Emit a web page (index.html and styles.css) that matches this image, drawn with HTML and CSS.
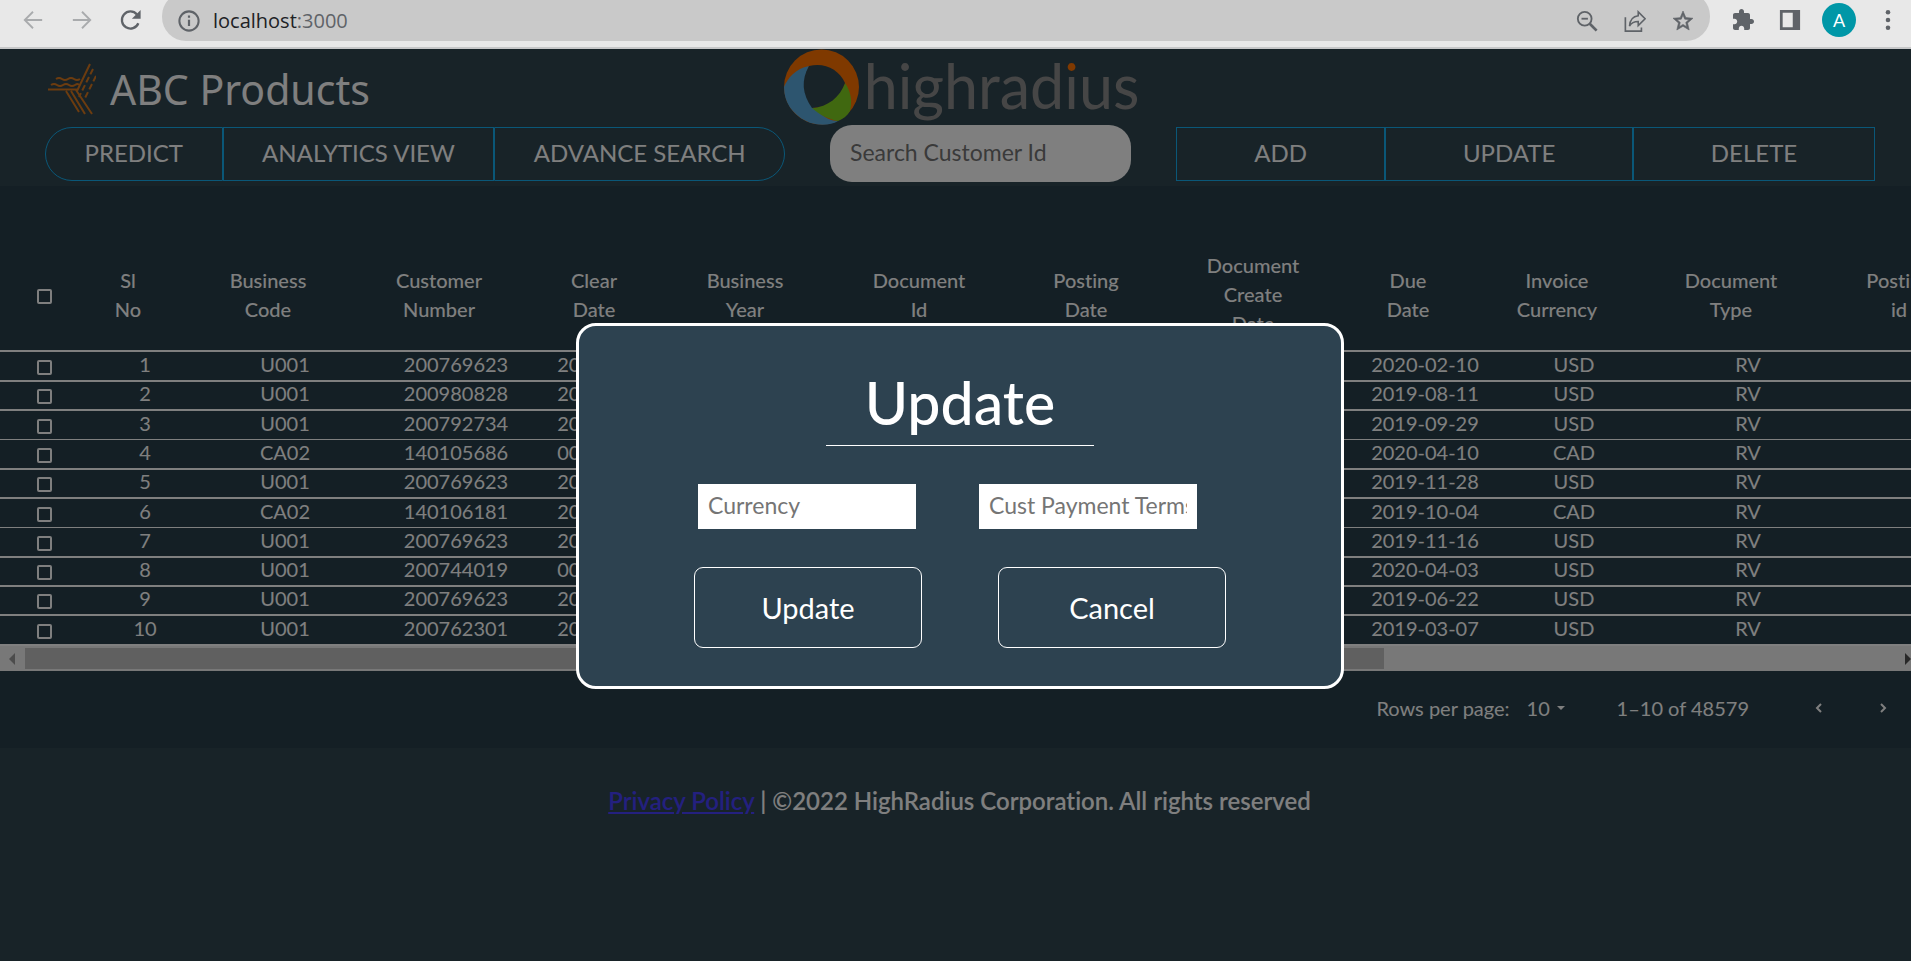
FILE: index.html
```html
<!DOCTYPE html>
<html lang="en">
<head>
<meta charset="utf-8">
<title>ABC Products</title>
<link rel="stylesheet" href="styles.css">
</head>
<body>
<div class="browser">
  <nav class="nav-icons" aria-label="Browser navigation">
    <button class="icon-btn faded" aria-label="Back"><svg viewBox="0 0 24 24"><path d="M22 12H4M12 3l-9 9 9 9" fill="none" stroke="currentColor" stroke-width="2"/></svg></button>
    <button class="icon-btn faded" aria-label="Forward"><svg viewBox="0 0 24 24"><path d="M2 12h18M12 3l9 9-9 9" fill="none" stroke="currentColor" stroke-width="2"/></svg></button>
    <button class="icon-btn" aria-label="Reload"><svg viewBox="0 0 24 24"><path d="M20 15.500A9.300 9.300 0 1 1 18.500 6" fill="none" stroke="currentColor" stroke-width="2.500"/><path d="M22.500 1v9.500H13z" fill="currentColor"/></svg></button>
  </nav>
  <div class="address">
    <svg class="info" viewBox="0 0 24 24"><circle cx="12" cy="12" r="10.500" fill="none" stroke="currentColor" stroke-width="2.200"/><path d="M12 10.500v7M12 6v2.500" stroke="currentColor" stroke-width="2.400"/></svg>
    <span class="url">localhost<span class="port">:3000</span></span>
    <div class="address-tools">
      <button class="icon-btn" aria-label="Zoom"><svg viewBox="0 0 24 24"><circle cx="9.500" cy="9.500" r="7.500" fill="none" stroke="currentColor" stroke-width="2"/><path d="M15 15l7.500 7.500" stroke="currentColor" stroke-width="3"/><path d="M6 9.500h7" stroke="currentColor" stroke-width="2"/></svg></button>
      <button class="icon-btn" aria-label="Share"><svg viewBox="0 0 24 24"><path d="M1.500 8v15h17.500v-4" fill="none" stroke="currentColor" stroke-width="1.800"/><path d="M15.500 2l7.500 7.500-7.500 7.500v-4.500c-4 0-7.500 1.500-9.500 5C6.500 11 10 7 15.500 6.300z" fill="none" stroke="currentColor" stroke-width="1.700"/></svg></button>
      <button class="icon-btn" aria-label="Bookmark"><svg viewBox="1 1 22 22"><path d="M22 9.240l-7.190-.62L12 2 9.190 8.630 2 9.240l5.460 4.730L5.820 21 12 17.270 18.180 21l-1.630-7.030L22 9.240zM12 15.400l-3.760 2.270 1-4.280-3.320-2.880 4.380-.38L12 6.100l1.710 4.040 4.380.38-3.320 2.880 1 4.280L12 15.400z" fill="currentColor" stroke="currentColor" stroke-width=".6"/></svg></button>
    </div>
  </div>
  <div class="browser-tools">
    <button class="icon-btn" aria-label="Extensions"><svg viewBox="1 1 22 22"><path d="M20.500 11H19V7c0-1.100-.9-2-2-2h-4V3.500C13 2.120 11.880 1 10.500 1S8 2.120 8 3.500V5H4c-1.100 0-1.990.9-1.990 2v3.800H3.500c1.490 0 2.700 1.210 2.700 2.700s-1.210 2.700-2.700 2.700H2V20c0 1.100.9 2 2 2h3.800v-1.500c0-1.490 1.210-2.700 2.700-2.700s2.700 1.210 2.700 2.700V22H17c1.100 0 2-.9 2-2v-4h1.500c1.380 0 2.500-1.120 2.500-2.500S21.880 11 20.500 11z" fill="currentColor"/></svg></button>
    <button class="icon-btn" aria-label="Side panel"><svg viewBox="0 0 24 24"><path d="M1 1h22v22H1zM4 4v16h11V4z" fill="currentColor" fill-rule="evenodd"/></svg></button>
    <button class="avatar">A</button>
    <button class="icon-btn" aria-label="Menu"><svg viewBox="0 0 24 24"><g fill="currentColor"><circle cx="12" cy="3.500" r="2.500"/><circle cx="12" cy="12" r="2.500"/><circle cx="12" cy="20.500" r="2.500"/></g></svg></button>
  </div>
</div>

<div class="page">
  <header class="header">
    <div class="brands">
      <div class="brand">
        <svg class="brand-mark" viewBox="0 0 48 52" fill="none" stroke="#d9781f" stroke-width="2"><path d="M0 26.500h29M42 1L29 28M28 27l16 24M23 28l14 23M18 28l13 21"/><path d="M8 16q3-2 6 0t6 0 6 0 6 0M3 22q3-2 6 0t6 0 6 0 6 0 4 0"/><path d="M45 6L31 34M48 13L36 37" stroke-dasharray="6 3"/></svg>
        <span class="brand-name">ABC Products</span>
      </div>
      <div class="hr-logo">
        <svg class="hr-mark" viewBox="0 0 75 76"><circle cx="37.500" cy="38" r="37.500" fill="#ff7200"/><path d="M0 38C3 30 12 19 25 17C17 35 20 51 34 62C40 69 48 72 54 72C46 77 32 77 22 72C8 65 0 53 0 38Z" fill="#5aaade"/><path d="M61 34C68 44 68 54 66 62C63 67 59 70 54 72C44 70 36 66 28 59C44 58 56 46 61 34Z" fill="#80d020"/><path d="M25 17C40 13 55 20 61 34C56 48 44 58 28 59C18 45 17 31 25 17Z" fill="#304650"/></svg>
        <span class="hr-name">highrad<span class="hr-i">i</span>us</span>
      </div>
    </div>
    <div class="controls">
      <div class="group rounded">
        <button class="w-predict">PREDICT</button><button class="w-analytics">ANALYTICS VIEW</button><button class="w-advance">ADVANCE SEARCH</button>
      </div>
      <input class="search" type="search" placeholder="Search Customer Id" aria-label="Search Customer Id">
      <div class="group">
        <button class="w-add">ADD</button><button class="w-update">UPDATE</button><button class="w-delete">DELETE</button>
      </div>
    </div>
  </header>

  <main class="grid">
    <div class="table-wrap">
      <table class="table">
        <colgroup><col class="c89"><col class="c112"><col class="c168"><col class="c174"><col class="c136"><col class="c166"><col class="c182"><col class="c152"><col class="c182"><col class="c128"><col class="c170"><col class="c178"><col class="c158"></colgroup>
        <thead><tr><th class="pick"><input type="checkbox" aria-label="Select all rows"></th><th>Sl<br>No</th><th>Business<br>Code</th><th>Customer<br>Number</th><th>Clear<br>Date</th><th>Business<br>Year</th><th>Document<br>Id</th><th>Posting<br>Date</th><th>Document<br>Create<br>Date</th><th>Due<br>Date</th><th>Invoice<br>Currency</th><th>Document<br>Type</th><th>Posting<br>id</th></tr></thead>
        <tbody>
          <tr><td class="pick"><input type="checkbox" aria-label="Select row 1"></td><td>1</td><td>U001</td><td>200769623</td><td>2020-02-11</td><td></td><td></td><td></td><td></td><td>2020-02-10</td><td>USD</td><td>RV</td><td></td></tr>
          <tr><td class="pick"><input type="checkbox" aria-label="Select row 2"></td><td>2</td><td>U001</td><td>200980828</td><td>2019-08-08</td><td></td><td></td><td></td><td></td><td>2019-08-11</td><td>USD</td><td>RV</td><td></td></tr>
          <tr><td class="pick"><input type="checkbox" aria-label="Select row 3"></td><td>3</td><td>U001</td><td>200792734</td><td>2019-12-30</td><td></td><td></td><td></td><td></td><td>2019-09-29</td><td>USD</td><td>RV</td><td></td></tr>
          <tr><td class="pick"><input type="checkbox" aria-label="Select row 4"></td><td>4</td><td>CA02</td><td>140105686</td><td>0000-00-00</td><td></td><td></td><td></td><td></td><td>2020-04-10</td><td>CAD</td><td>RV</td><td></td></tr>
          <tr><td class="pick"><input type="checkbox" aria-label="Select row 5"></td><td>5</td><td>U001</td><td>200769623</td><td>2019-11-25</td><td></td><td></td><td></td><td></td><td>2019-11-28</td><td>USD</td><td>RV</td><td></td></tr>
          <tr><td class="pick"><input type="checkbox" aria-label="Select row 6"></td><td>6</td><td>CA02</td><td>140106181</td><td>2019-12-04</td><td></td><td></td><td></td><td></td><td>2019-10-04</td><td>CAD</td><td>RV</td><td></td></tr>
          <tr><td class="pick"><input type="checkbox" aria-label="Select row 7"></td><td>7</td><td>U001</td><td>200769623</td><td>2019-11-12</td><td></td><td></td><td></td><td></td><td>2019-11-16</td><td>USD</td><td>RV</td><td></td></tr>
          <tr><td class="pick"><input type="checkbox" aria-label="Select row 8"></td><td>8</td><td>U001</td><td>200744019</td><td>0000-00-00</td><td></td><td></td><td></td><td></td><td>2020-04-03</td><td>USD</td><td>RV</td><td></td></tr>
          <tr><td class="pick"><input type="checkbox" aria-label="Select row 9"></td><td>9</td><td>U001</td><td>200769623</td><td>2019-06-18</td><td></td><td></td><td></td><td></td><td>2019-06-22</td><td>USD</td><td>RV</td><td></td></tr>
          <tr><td class="pick"><input type="checkbox" aria-label="Select row 10"></td><td>10</td><td>U001</td><td>200762301</td><td>2019-03-06</td><td></td><td></td><td></td><td></td><td>2019-03-07</td><td>USD</td><td>RV</td><td></td></tr>
        </tbody>
      </table>
    </div>
    <div class="scrollbar">
      <svg class="arrow-left" viewBox="0 0 6 12"><path d="M6 0v12L0 6z" fill="currentColor"/></svg>
      <div class="thumb"></div><div class="track"></div>
      <svg class="arrow-right" viewBox="0 0 6 12"><path d="M0 0v12l6-6z" fill="currentColor"/></svg>
    </div>
    <div class="pagination">
      <label for="rows">Rows per page:</label>
      <span class="select-wrap"><select id="rows"><option>10</option></select><svg class="caret" viewBox="0 0 8 4"><path d="M0 0h8L4 4z" fill="currentColor"/></svg></span>
      <span class="range">1–10 of 48579</span>
      <button class="pager" aria-label="Previous page"><svg viewBox="0 0 8 12"><path d="M6 2L2 6l4 4" fill="none" stroke="currentColor" stroke-width="2"/></svg></button>
      <button class="pager" aria-label="Next page"><svg viewBox="0 0 8 12"><path d="M2 2l4 4-4 4" fill="none" stroke="currentColor" stroke-width="2"/></svg></button>
    </div>
  </main>

  <footer class="footer"><a href="#">Privacy Policy</a> | ©2022 HighRadius Corporation. All rights reserved</footer>

  <div class="backdrop">
    <form class="dialog" role="dialog" aria-labelledby="dialog-title">
      <h1 id="dialog-title">Update</h1>
      <div class="fields">
        <input type="text" placeholder="Currency" aria-label="Currency">
        <input type="text" placeholder="Cust Payment Terms" aria-label="Cust Payment Terms">
      </div>
      <div class="actions">
        <button type="button">Update</button>
        <button type="button">Cancel</button>
      </div>
    </form>
  </div>
</div>
</body>
</html>
```

FILE: styles.css
```css
* { box-sizing: border-box; }
body {
  margin: 0;
  min-height: 100vh;
  display: flex;
  flex-direction: column;
  font-family: Lato, "Noto Sans", sans-serif;
  font-variant-ligatures: none;
  color: #fff;
  background: #304650;
}
button, input, select { font: inherit; color: inherit; }
button { background: none; border: 0; padding: 0; cursor: pointer; }
svg { display: block; }

/* Browser toolbar */
.browser {
  display: flex;
  height: 49px;
  padding: 0 12px 6px 22px;
  background: #e8e8e8;
  border-bottom: 2px solid #c6c7c8;
  color: #5f6368;
}
.nav-icons { display: flex; gap: 27px; align-items: center; width: 140px; padding-bottom: 2px; }
.icon-btn { width: 22px; height: 22px; color: #5f6368; }
.icon-btn svg { width: 22px; height: 22px; }
.icon-btn.faded { color: #a9abad; }
.address {
  flex: 1;
  display: flex;
  align-items: center;
  height: 49px;
  margin-top: -8px;
  padding: 8px 16px 0;
  border-radius: 24px;
  background: #c9c9c9;
}
.info { width: 22px; height: 22px; }
.url { margin-left: 13px; font: 20px "Open Sans", sans-serif; color: #202124; }
.port { color: #5f6368; }
.address-tools { display: flex; gap: 26px; margin-left: auto; }
.browser-tools { display: flex; gap: 25px; align-items: center; padding: 0 0 2px 22px; }
.avatar {
  width: 34px;
  height: 34px;
  margin: 0 -4px;
  border-radius: 50%;
  background: #0097a7;
  color: #fff;
  font-size: 18px;
}

/* Page header */
.page { position: relative; flex: 1; display: flex; flex-direction: column; }
.header { display: flex; flex-direction: column; padding-bottom: 4px; }
.brands {
  display: grid;
  grid-template-columns: 1fr auto 1fr;
  align-items: center;
  height: 76px;
  padding: 0 36px 0 48px;
}
.brand { display: flex; align-items: center; gap: 14px; padding-top: 4px; }
.brand-mark { width: 48px; height: 52px; }
.brand-name { font: 41px/60px "Noto Sans", sans-serif; }
.hr-logo { display: flex; align-items: center; gap: 5px; height: 76px; }
.hr-mark { width: 75px; height: 76px; }
.hr-name { font-size: 61px; line-height: 84px; padding-bottom: 2px; color: #8c8c8c; }
.hr-i {
  color: transparent;
  background: linear-gradient(#ff7200 35%, #8c8c8c 35%);
  -webkit-background-clip: text;
  background-clip: text;
}
.controls {
  display: grid;
  grid-template-columns: 740fr 301fr 699fr;
  gap: 45px;
  align-items: center;
  padding: 0 36px 0 45px;
}
.group { display: flex; height: 55px; padding-top: 1px; }
.group button { border: 1px solid #14aff1; font-size: 24px; padding-bottom: 3px; }
.rounded button:first-child { border-radius: 27px 0 0 27px; }
.rounded button:last-child { border-radius: 0 27px 27px 0; }
.w-predict { flex: 177; }
.w-analytics { flex: 272; }
.w-advance { flex: 291; }
.w-add { flex: 209; }
.w-update { flex: 248; }
.w-delete { flex: 242; }
.search {
  width: 100%;
  height: 57px;
  padding: 0 20px 3px;
  border: 0;
  border-radius: 22px;
  background: #fff;
  font-size: 23px;
}
.search::placeholder { color: #757575; }

/* Invoice table */
.grid { background: #283e4a; }
.table-wrap { overflow: hidden; padding-top: 55px; }
.table { width: 1995px; table-layout: fixed; border-collapse: separate; border-spacing: 0; font-size: 20px; }
.c89 { width: 89px; }
.c112 { width: 112px; }
.c128 { width: 128px; }
.c136 { width: 136px; }
.c152 { width: 152px; }
.c158 { width: 158px; }
.c166 { width: 166px; }
.c168 { width: 168px; }
.c170 { width: 170px; }
.c174 { width: 174px; }
.c178 { width: 178px; }
.c182 { width: 182px; }
th, td { padding: 0; text-align: center; border-bottom: 2px solid #fff; }
th { height: 111px; padding: 0 34px 2px 0; line-height: 29px; font-weight: 500; }
td { height: 29px; line-height: 22px; padding-bottom: 5px; }
tbody tr:nth-child(3n+1) td { height: 30px; }
tbody tr:nth-child(3) td, tbody tr:nth-child(6) td { border-bottom-width: 1px; }
th.pick, td.pick { padding: 2px 0 0; }
.pick input {
  display: block;
  appearance: none;
  width: 15px;
  height: 15px;
  margin: 0 auto;
  border: 2px solid #fff;
  border-radius: 2px;
}
.scrollbar { display: flex; align-items: center; height: 25px; background: #f1f1f1; }
.arrow-left, .arrow-right { width: 6px; height: 12px; }
.arrow-left { margin: 0 10px 0 9px; color: #989898; }
.arrow-right { color: #505050; }
.thumb { flex: 1359; height: 21px; background: #c1c1c1; }
.track { flex: 521; }
.pagination {
  display: flex;
  align-items: center;
  justify-content: flex-end;
  height: 77px;
  padding: 0 24px 4px 0;
  font-size: 20px;
}
.select-wrap { display: flex; align-items: center; gap: 6px; margin: 0 52px 0 17px; }
.select-wrap select { appearance: none; border: 0; background: none; padding: 0; width: 24px; }
.caret { width: 8px; height: 4px; }
.pager { width: 8px; }
.range { margin-right: 66px; }
.pager + .pager { margin-left: 56px; }

.footer { padding: 37px 0 0 8px; text-align: center; font-size: 24px; line-height: 32px; font-weight: 600; }
.footer a { color: #4840ff; }

/* Modal */
.backdrop {
  position: absolute;
  inset: 0;
  display: flex;
  align-items: center;
  justify-content: center;
  background: rgba(0, 0, 0, 0.5);
}
.dialog {
  display: flex;
  flex-direction: column;
  align-items: center;
  width: 768px;
  margin: 2px 0 0 9px;
  padding: 42px 48px 38px;
  border: 3px solid #fff;
  border-radius: 20px;
  background: #2d4250;
}
.dialog h1 {
  width: 268px;
  margin: 0 0 38px;
  padding-bottom: 7px;
  border-bottom: 1px solid #fff;
  text-align: center;
  font-size: 59px;
  line-height: 70px;
  font-weight: 500;
}
.fields { display: flex; gap: 63px; padding-right: 25px; margin-bottom: 38px; }
.fields input {
  width: 218px;
  height: 45px;
  padding: 0 10px 4px;
  border: 0;
  background: #fff;
  color: #222;
  font-size: 23px;
}
.fields input::placeholder { color: #757575; }
.actions { display: flex; gap: 76px; }
.actions button { width: 228px; height: 81px; border: 1px solid #fff; border-radius: 9px; font-size: 29px; }
```
